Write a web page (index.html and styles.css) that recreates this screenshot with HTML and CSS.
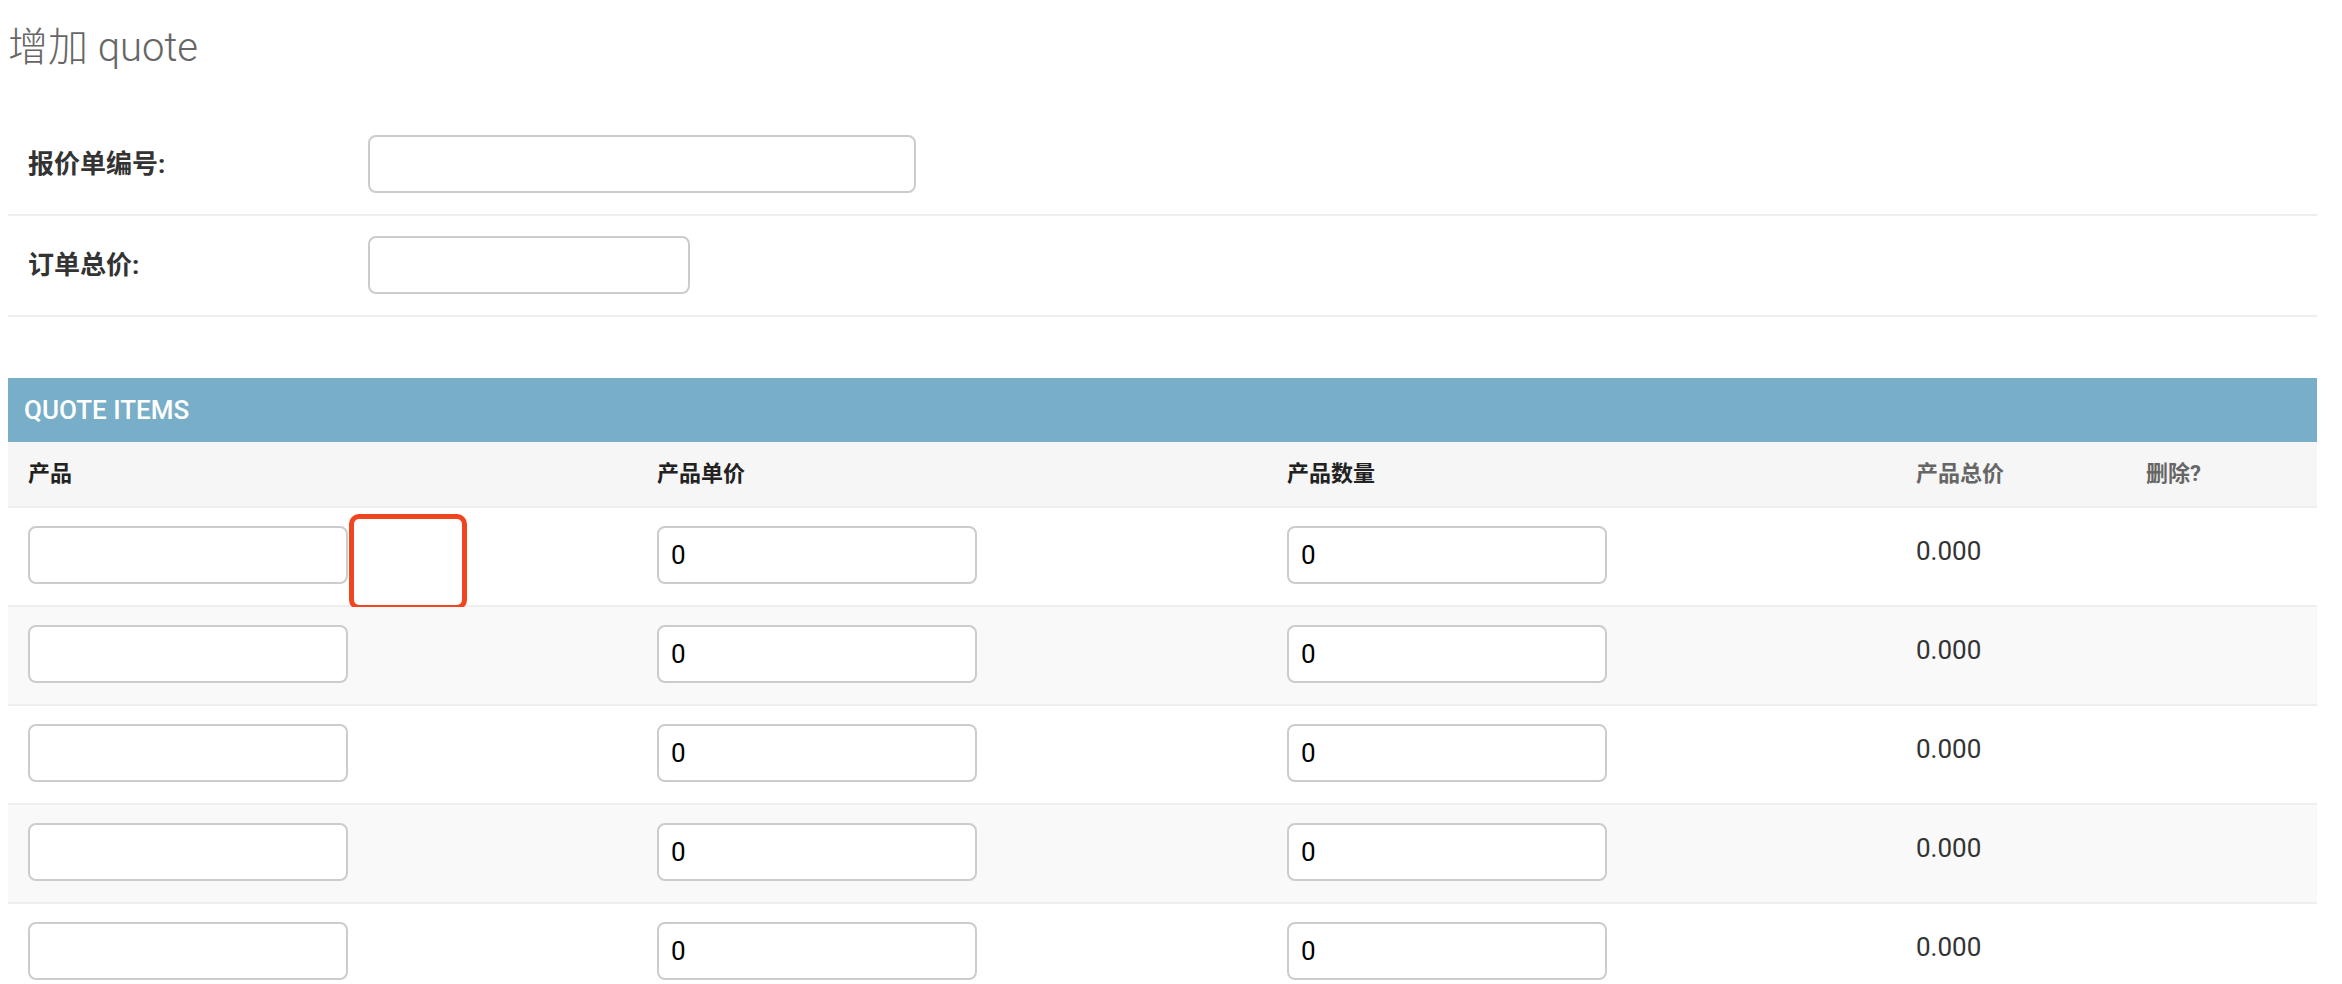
FILE: index.html
```html
<!DOCTYPE html>
<html lang="zh-CN">
<head>
  <meta charset="UTF-8">
  <meta name="viewport" content="width=device-width, initial-scale=1.0">
  <title>增加 quote</title>
  <link rel="stylesheet" href="styles.css">
</head>
<body>
  <div class="content">
    <h1 class="title">增加 quote</h1>

    <form class="quote-form">
      <fieldset class="module aligned">
        <div class="form-row">
          <label class="required" for="id_number">报价单编号:</label>
          <input type="text" id="id_number" class="text-field">
        </div>
        <div class="form-row">
          <label class="required" for="id_total">订单总价:</label>
          <input type="text" id="id_total" class="decimal-field">
        </div>
      </fieldset>

      <!-- Inline items -->
      <div class="inline-group">
        <h2 class="inline-caption">Quote items</h2>
        <table class="tabular">
          <colgroup>
            <col class="col-product">
            <col class="col-price">
            <col class="col-qty">
            <col class="col-total">
            <col class="col-delete">
          </colgroup>
          <thead>
            <tr>
              <th class="required">产品</th>
              <th class="required">产品单价</th>
              <th class="required">产品数量</th>
              <th>产品总价</th>
              <th>删除?</th>
            </tr>
          </thead>
          <tbody>
            <tr>
              <td class="field-product">
                <input type="text" class="item-input">
                <span class="marker"></span>
              </td>
              <td><input type="text" class="item-input" value="0"></td>
              <td><input type="text" class="item-input" value="0"></td>
              <td><p class="readonly">0.000</p></td>
              <td></td>
            </tr>
            <tr>
              <td class="field-product"><input type="text" class="item-input"></td>
              <td><input type="text" class="item-input" value="0"></td>
              <td><input type="text" class="item-input" value="0"></td>
              <td><p class="readonly">0.000</p></td>
              <td></td>
            </tr>
            <tr>
              <td class="field-product"><input type="text" class="item-input"></td>
              <td><input type="text" class="item-input" value="0"></td>
              <td><input type="text" class="item-input" value="0"></td>
              <td><p class="readonly">0.000</p></td>
              <td></td>
            </tr>
            <tr>
              <td class="field-product"><input type="text" class="item-input"></td>
              <td><input type="text" class="item-input" value="0"></td>
              <td><input type="text" class="item-input" value="0"></td>
              <td><p class="readonly">0.000</p></td>
              <td></td>
            </tr>
            <tr>
              <td class="field-product"><input type="text" class="item-input"></td>
              <td><input type="text" class="item-input" value="0"></td>
              <td><input type="text" class="item-input" value="0"></td>
              <td><p class="readonly">0.000</p></td>
              <td></td>
            </tr>
          </tbody>
        </table>
      </div>
    </form>
  </div>
</body>
</html>
```

FILE: styles.css
```css
body {
  margin: 0;
  padding: 0;
  background-color: #fff;
  color: #333;
  font-family: Roboto, "Noto Sans CJK SC", sans-serif;
}

.content {
  padding: 24px 25px 0 8px;
}

.title {
  margin: 0 0 43px;
  font-size: 40px;
  line-height: 48px;
  font-weight: 300;
  color: #666;
}

.module {
  margin: 0 0 61px;
  padding: 0;
  border: none;
}

.form-row {
  display: flex;
  align-items: center;
  padding: 20px 20px 21px;
  border-bottom: 2px solid #eee;
}

.form-row label {
  flex: none;
  width: 340px;
  font-size: 26px;
  line-height: 1;
  font-weight: bold;
  color: #333;
}

input[type="text"] {
  box-sizing: border-box;
  height: 58px;
  padding: 0 12px;
  border: 2px solid #ccc;
  border-radius: 8px;
  font-family: Roboto, sans-serif;
  font-size: 26px;
  color: #000;
  background-color: #fff;
}

.text-field {
  width: 548px;
}

.decimal-field {
  width: 322px;
}

.inline-caption {
  margin: 0;
  padding: 16px;
  background-color: #79aec8;
  color: #fff;
  font-size: 26px;
  line-height: 32px;
  font-weight: 500;
  text-transform: uppercase;
}

.tabular {
  width: 100%;
  border-collapse: collapse;
  table-layout: fixed;
}

.col-product { width: 629px; }
.col-price { width: 630px; }
.col-qty { width: 629px; }
.col-total { width: 230px; }

.tabular th {
  padding: 18px 20px 19px;
  background-color: #f6f6f6;
  border-bottom: 2px solid #eee;
  font-size: 22px;
  line-height: 27px;
  font-weight: bold;
  text-align: left;
  color: #666;
}

.tabular th.required {
  color: #222;
}

.tabular td {
  padding: 18px 20px 21px;
  vertical-align: top;
  border-bottom: 2px solid #eee;
}

.tabular tbody tr:nth-child(even) td {
  background-color: #f9f9f9;
}

.item-input {
  width: 320px;
}

.readonly {
  margin: 8px 0 0;
  font-size: 26px;
  line-height: 34px;
  color: #333;
}

.field-product {
  position: relative;
}

/* highlight drawn over the screenshot */
.marker {
  position: absolute;
  left: 341px;
  top: 6px;
  box-sizing: border-box;
  width: 118px;
  height: 96px;
  border: 5px solid #f0451f;
  border-radius: 10px;
}
```
